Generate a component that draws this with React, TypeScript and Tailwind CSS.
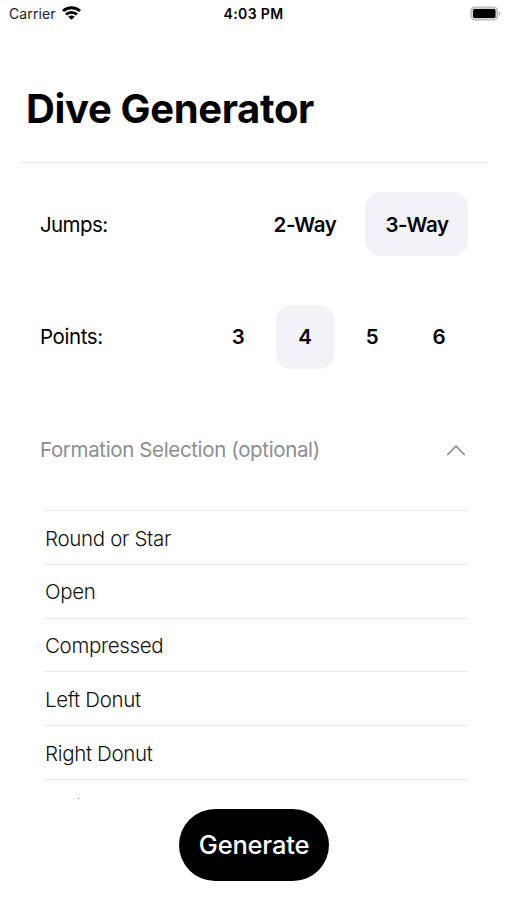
import { useState } from 'react';

const jumpTypes = ['2-Way', '3-Way'];
const pointCounts = ['3', '4', '5', '6'];
const formations = ['Round or Star', 'Open', 'Compressed', 'Left Donut', 'Right Donut'];

function StatusBar() {
  return (
    <div className="grid h-7 grid-cols-3 items-center pl-[9px] pr-[6px] text-sm leading-none">
      <div className="flex items-center gap-1.5">
        <span className="tracking-[0.1px] text-[#222]">Carrier</span>
        <svg className="-mt-0.5 h-[14px] w-[19px]" viewBox="0 0 19 14" fill="none" stroke="#000" strokeWidth="2.8">
          <path d="M1 5.1C5.8.6 13.2.6 18 5.1" />
          <path d="M4 8.5C7.1 5.6 11.9 5.6 15 8.5" />
          <path d="M9.5 13.7 6.3 10.8C8 9.2 11 9.2 12.7 10.8Z" fill="#000" stroke="none" />
        </svg>
      </div>
      <span className="-ml-[3px] text-center font-semibold tracking-[0.35px] whitespace-nowrap">4:03 PM</span>
      <svg className="-mt-0.5 h-[15px] w-[31px] justify-self-end" viewBox="0 0 31 15">
        <rect x="1" y="1" width="26.5" height="13" rx="4" fill="#d4d4d4" stroke="#b5b5b5" strokeWidth="1.2" />
        <rect x="3" y="3" width="22.5" height="9" rx="1.6" fill="#000" />
        <path d="M28.8 5.2C31.2 6.2 31.2 8.8 28.8 9.8Z" fill="#b9b9b9" />
      </svg>
    </div>
  );
}

export default function App() {
  const [jump, setJump] = useState('3-Way');
  const [points, setPoints] = useState('4');
  const [isOpen, setIsOpen] = useState(true);

  return (
    <div className="flex h-[900px] w-[507px] flex-col overflow-hidden bg-white font-['Inter',sans-serif] text-black">
      <StatusBar />

      {/* Title */}
      <header className="ml-5 h-[135px] w-[468px] shrink-0 border-b border-[#e9e9eb] pt-[57px] pl-[6px]">
        <h1 className="text-[40px] leading-[48px] font-bold tracking-[-0.35px] whitespace-nowrap">Dive Generator</h1>
      </header>

      {/* Jumps */}
      <div className="mt-[29px] ml-10 flex h-16 w-[428px] shrink-0 items-center justify-between text-[20.5px]">
        <span className="pt-[2px] tracking-[-0.6px]">Jumps:</span>
        <div className="flex gap-[9px]">
          {jumpTypes.map((type) => (
            <button
              key={type}
              onClick={() => setJump(type)}
              className={`h-16 w-[103px] rounded-[15px] pt-[2px] pl-px font-semibold tracking-[-0.4px] ${jump === type ? 'bg-[#f2f2f7]' : ''}`}
            >
              {type}
            </button>
          ))}
        </div>
      </div>

      {/* Points */}
      <div className="mt-12 ml-10 flex h-[65px] w-[428px] shrink-0 items-center justify-between text-[20.5px]">
        <span className="pt-[2px] tracking-[-0.4px]">Points:</span>
        <div className="flex gap-[9px]">
          {pointCounts.map((count) => (
            <button
              key={count}
              onClick={() => setPoints(count)}
              className={`h-16 w-[58px] rounded-[15px] pt-[2px] font-semibold tracking-[-0.3px] ${points === count ? 'bg-[#f2f2f7]' : ''}`}
            >
              {count}
            </button>
          ))}
        </div>
      </div>

      {/* Formation selection */}
      <button
        onClick={() => setIsOpen(!isOpen)}
        className="mt-[65px] ml-10 flex h-8 w-[426px] shrink-0 items-center justify-between text-[20.5px] text-[#8e8e90]"
      >
        <span className="pt-px tracking-[-0.36px]">Formation Selection (optional)</span>
        <svg className="h-3 w-5" viewBox="0 0 20 12" fill="none" stroke="currentColor" strokeWidth="1.7" strokeLinecap="round" strokeLinejoin="round">
          <path d={isOpen ? 'M1.8 10.5 10 2.2 18.2 10.5' : 'M1.8 2.2 10 10.5 18.2 2.2'} />
        </svg>
      </button>

      <div className="mt-11 ml-11 h-[290px] w-[424px] shrink-0 overflow-hidden">
        {isOpen && (
          <>
            <ul className="border-t border-[#e9e9eb]">
              {formations.map((name) => (
                <li
                  key={name}
                  className="flex h-[53.75px] items-center border-b border-[#e9e9eb] pt-[3px] pl-px text-[20.5px] font-light tracking-[-0.33px] text-[#111]"
                >
                  {name}
                </li>
              ))}
            </ul>
            <div className="mt-[18.5px] ml-[34px] size-px bg-[#777]" />
          </>
        )}
      </div>

      <button className="mt-[9px] ml-[179px] h-[72px] w-[150px] shrink-0 rounded-full bg-black pt-px text-[25.5px] font-[450] tracking-[-0.2px] text-white">
        Generate
      </button>
    </div>
  );
}
